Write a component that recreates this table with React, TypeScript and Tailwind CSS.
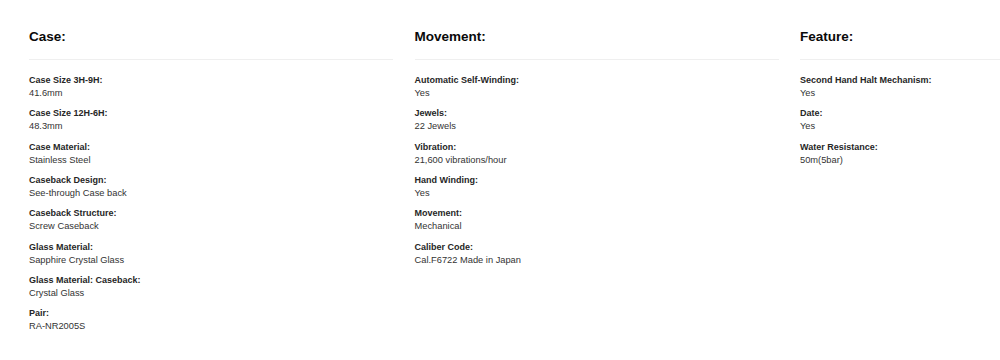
import React from "react";

type Item = { label: string; value: string };
type Section = { title: string; items: Item[] };

const sections: Section[] = [
  {
    title: "Case:",
    items: [
      { label: "Case Size 3H-9H:", value: "41.6mm" },
      { label: "Case Size 12H-6H:", value: "48.3mm" },
      { label: "Case Material:", value: "Stainless Steel" },
      { label: "Caseback Design:", value: "See-through Case back" },
      { label: "Caseback Structure:", value: "Screw Caseback" },
      { label: "Glass Material:", value: "Sapphire Crystal Glass" },
      { label: "Glass Material: Caseback:", value: "Crystal Glass" },
      { label: "Pair:", value: "RA-NR2005S" },
    ],
  },
  {
    title: "Movement:",
    items: [
      { label: "Automatic Self-Winding:", value: "Yes" },
      { label: "Jewels:", value: "22 Jewels" },
      { label: "Vibration:", value: "21,600 vibrations/hour" },
      { label: "Hand Winding:", value: "Yes" },
      { label: "Movement:", value: "Mechanical" },
      { label: "Caliber Code:", value: "Cal.F6722 Made in Japan" },
    ],
  },
  {
    title: "Feature:",
    items: [
      { label: "Second Hand Halt Mechanism:", value: "Yes" },
      { label: "Date:", value: "Yes" },
      { label: "Water Resistance:", value: "50m(5bar)" },
    ],
  },
];

export default function App() {
  return (
    <div
      className="w-[1000px] h-[360px] overflow-hidden bg-white"
      style={{ fontFamily: '"Liberation Sans", Arial, sans-serif' }}
    >
      <div className="flex gap-[21.5px] pl-[29px] pt-[28.5px]">
        {sections.map((s) => (
          <div key={s.title} className="w-[364px] shrink-0">
            <div className="pb-[14.5px] border-b border-[#efefef]">
              <h2 className="text-[13.5px] leading-[16px] font-bold text-[#0a0a0a]">
                {s.title}
              </h2>
            </div>
            <div className="mt-[14px] flex flex-col gap-[7.33px]">
              {s.items.map((it) => (
                <div key={it.label}>
                  <div className="text-[9px] leading-[13px] font-bold text-[#262626]">
                    {it.label}
                  </div>
                  <div className="text-[9.3px] leading-[13px] text-[#333]">
                    {it.value}
                  </div>
                </div>
              ))}
            </div>
          </div>
        ))}
      </div>
    </div>
  );
}
